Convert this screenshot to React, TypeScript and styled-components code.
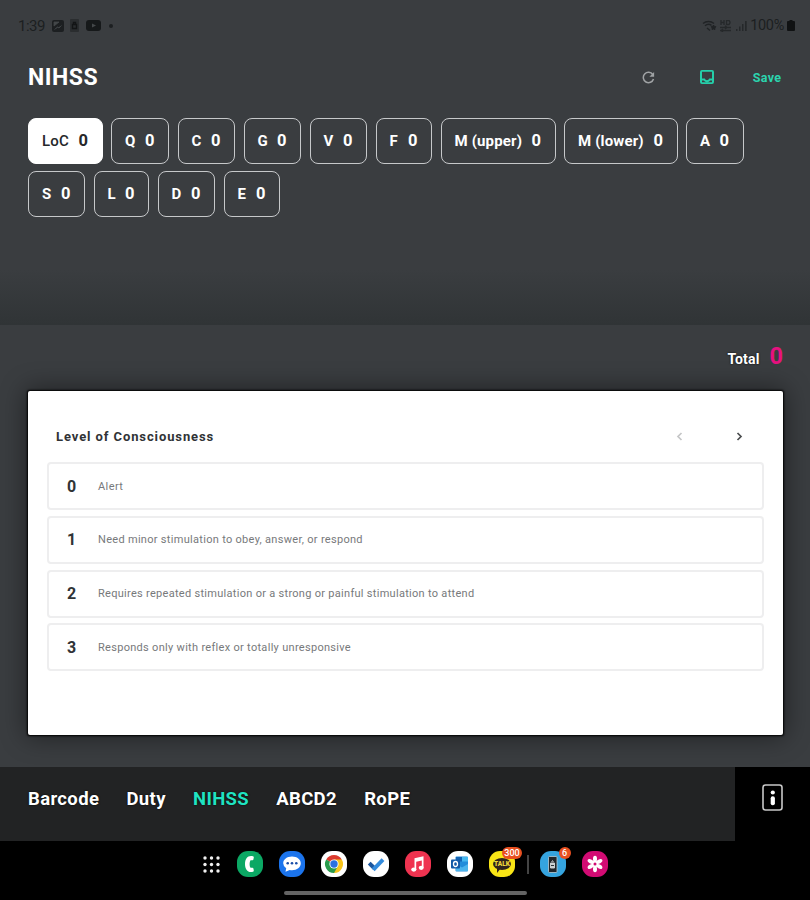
import React from "react";
import styled, { createGlobalStyle } from "styled-components";

const GlobalStyle = createGlobalStyle`
  * { box-sizing: border-box; }
  body { margin: 0; background: #000; font-family: Roboto, "Liberation Sans", sans-serif; }
  button { font-family: inherit; border: 0; padding: 0; background: none; cursor: pointer; }
  svg { display: block; flex: none; }
`;

const Screen = styled.main`
  width: 810px;
  height: 900px;
  overflow: hidden;
  display: flex;
  flex-direction: column;
  background: #3a3d40;
`;

const Upper = styled.section`
  height: 325px;
  flex: none;
  display: flex;
  flex-direction: column;
  background: linear-gradient(#3a3d40 0, #3a3d40 270px, #303436 325px);
`;

const StatusBar = styled.div`
  height: 50px;
  display: flex;
  align-items: center;
  justify-content: space-between;
  padding: 1px 15px 0 18px;
  color: #1c1f21;
  font-size: 15px;
`;

const StatusGroup = styled.div<{ $gap: number }>`
  display: flex;
  align-items: center;
  gap: ${(p) => p.$gap}px;
`;

const Clock = styled.span`
  width: 27px;
  letter-spacing: -0.5px;
`;

const Percent = styled.span`
  font-size: 14.5px;
  letter-spacing: -0.3px;
`;

const NoticeDot = styled.i`
  width: 4px;
  height: 4px;
  margin-left: 2px;
  border-radius: 50%;
  background: #1c1f21;
`;

const Header = styled.header`
  height: 54px;
  display: flex;
  align-items: center;
  justify-content: space-between;
  padding: 0 28px;
`;

const Title = styled.h1`
  margin: 2px 0 0;
  color: #fff;
  font-size: 23px;
  line-height: 28px;
  font-weight: 700;
  letter-spacing: 0.55px;
`;

const Actions = styled.div`
  display: flex;
  align-items: center;
  gap: 37px;
`;

const IconButton = styled.button<{ $tone: string }>`
  width: 22px;
  height: 22px;
  display: grid;
  place-items: center;
  color: ${(p) => p.$tone};
`;

const SaveButton = styled.button`
  width: 30px;
  margin-left: -3px;
  color: #2bd4ae;
  font-size: 12.5px;
  font-weight: 700;
  letter-spacing: 0.25px;
  white-space: nowrap;
`;

const ChipRows = styled.div`
  display: flex;
  flex-direction: column;
  gap: 7px;
  padding: 14px 28px 0;
`;

const ChipRow = styled.div`
  display: flex;
  gap: 8.5px;
`;

const Chip = styled.button<{ $width: number; $active?: boolean }>`
  width: ${(p) => p.$width}px;
  height: 46px;
  flex: none;
  display: flex;
  align-items: center;
  justify-content: space-between;
  padding: 0 13.5px 1px 13px;
  border: 1px solid ${(p) => (p.$active ? "#fff" : "#c6c8ca")};
  border-radius: 8px;
  background: ${(p) => (p.$active ? "#fff" : "transparent")};
  color: ${(p) => (p.$active ? "#25282a" : "#fff")};
  font-size: 15px;
  font-weight: ${(p) => (p.$active ? 500 : 700)};
  letter-spacing: 0.15px;
  white-space: nowrap;
`;

const ChipScore = styled.span`
  font-size: 16.5px;
  font-weight: 700;
`;

const Lower = styled.section`
  height: 442px;
  flex: none;
  display: flex;
  flex-direction: column;
  padding: 0 27px 0 28px;
`;

const TotalLine = styled.div`
  height: 66px;
  display: flex;
  align-items: baseline;
  justify-content: flex-end;
  gap: 10px;
  padding-top: 17px;
  color: #fff;
`;

const TotalLabel = styled.span`
  font-size: 14px;
  font-weight: 700;
  letter-spacing: 0.15px;
  text-shadow: 0 0 2px #000;
`;

const TotalScore = styled.span`
  font-size: 23.5px;
  font-weight: 700;
  color: #e6117f;
`;

const Card = styled.article`
  height: 344px;
  background: #fff;
  border-radius: 2px;
  box-shadow: 0 0 2px 0.5px #000, 0 0 26px 2px rgba(0, 0, 0, 0.45);
`;

const CardHeader = styled.div`
  height: 71px;
  display: flex;
  align-items: center;
  justify-content: space-between;
  padding: 20px 33px 0 28px;
`;

const CardTitle = styled.h2`
  margin: 0;
  color: #303336;
  font-size: 13px;
  font-weight: 700;
  letter-spacing: 0.9px;
`;

const Pager = styled.div`
  display: flex;
  gap: 37px;
`;

const OptionList = styled.div`
  display: flex;
  flex-direction: column;
  gap: 5.8px;
  padding: 0 19px;
`;

const Option = styled.button`
  height: 48px;
  display: flex;
  align-items: center;
  padding: 0 18px;
  border: 2px solid #eeeeef;
  border-radius: 4px;
  text-align: left;
`;

const OptionScore = styled.span`
  width: 31px;
  color: #303336;
  font-size: 16px;
  font-weight: 700;
`;

const OptionText = styled.span<{ $tracking: number }>`
  color: #77797b;
  font-size: 11px;
  letter-spacing: ${(p) => p.$tracking}px;
  white-space: nowrap;
`;

const Navigation = styled.nav`
  height: 74px;
  flex: none;
  display: grid;
  grid-template-columns: 735px 75px;
  background: #000;
`;

const Tabs = styled.div`
  display: flex;
  gap: 27.2px;
  padding: 20px 28px;
  background: #222324;
`;

const Tab = styled.button<{ $active?: boolean }>`
  height: 24px;
  color: ${(p) => (p.$active ? "#20e3c2" : "#fff")};
  font-size: 18.5px;
  line-height: 24px;
  font-weight: 700;
  letter-spacing: 0.35px;
  text-shadow: 0 0 2px #000;
`;

const InfoButton = styled.button`
  display: flex;
  justify-content: center;
  padding-top: 17px;
`;

const Dock = styled.footer`
  height: 59px;
  flex: none;
  display: flex;
  flex-direction: column;
  align-items: flex-start;
  background: #000;
`;

const DockApps = styled.div`
  height: 46px;
  display: flex;
  align-items: center;
  gap: 16px;
  padding-left: 203px;
`;

const AppIcon = styled.span<{ $color: string }>`
  position: relative;
  width: 26px;
  height: 26px;
  border-radius: 11px;
  background: ${(p) => p.$color};
`;

const Launcher = styled.span`
  width: 18px;
  display: flex;
`;

const DockDivider = styled.i`
  width: 2px;
  height: 19px;
  margin: 0 -5px 0 -4.5px;
  background: #444;
`;

const Badge = styled.span<{ $width: number }>`
  position: absolute;
  top: -4px;
  right: ${(p) => (p.$width > 14 ? -7 : -5)}px;
  width: ${(p) => p.$width}px;
  height: 12px;
  border-radius: 6px;
  background: #e95020;
  color: #fff;
  font-size: 9px;
  line-height: 12px;
  font-weight: 500;
  text-align: center;
`;

const HomeBar = styled.i`
  width: 243px;
  height: 4px;
  margin: 4px 0 0 284px;
  border-radius: 2px;
  background: #646464;
`;

type ChipData = { label: string; width: number; active?: boolean };

const chipRows: ChipData[][] = [
  [
    { label: "LoC", width: 74.5, active: true },
    { label: "Q", width: 58 },
    { label: "C", width: 57.5 },
    { label: "G", width: 57.5 },
    { label: "V", width: 57.5 },
    { label: "F", width: 56.5 },
    { label: "M (upper)", width: 115 },
    { label: "M (lower)", width: 113.5 },
    { label: "A", width: 57.5 },
  ],
  [
    { label: "S", width: 57 },
    { label: "L", width: 55.5 },
    { label: "D", width: 57.5 },
    { label: "E", width: 56.5 },
  ],
];

const options = [
  { text: "Alert", tracking: 0.4 },
  { text: "Need minor stimulation to obey, answer, or respond", tracking: 0.3 },
  { text: "Requires repeated stimulation or a strong or painful stimulation to attend", tracking: 0.29 },
  { text: "Responds only with reflex or totally unresponsive", tracking: 0.3 },
];

const tabs = ["Barcode", "Duty", "NIHSS", "ABCD2", "RoPE"];

const PictureIcon = () => (
  <svg width="12" height="12" viewBox="0 0 12 12">
    <rect width="12" height="12" rx="2" fill="#1c1f21" />
    <path d="M2 2h5L2 6zM2.500 9.500 5.500 7l1.500 1 2.500-2.500" fill="#44484a" stroke="#44484a" strokeWidth=".8" />
  </svg>
);

const PhoneNoticeIcon = () => (
  <svg width="9" height="13" viewBox="0 0 9 13">
    <rect width="9" height="13" rx="1" fill="#2a2d2f" />
    <path d="M2.5 5.5h4v4h-4zM3.5 5V3.5h2V5" fill="none" stroke="#131516" strokeWidth="1.4" />
  </svg>
);

const VideoIcon = () => (
  <svg width="15" height="11" viewBox="0 0 15 11">
    <rect width="15" height="11" rx="3" fill="#16191a" />
    <path d="m6 3.5 4 2-4 2z" fill="#44484a" />
  </svg>
);

const WifiIcon = () => (
  <svg width="15" height="12" viewBox="0 0 15 12" fill="none" stroke="#202325">
    <path d="M1 3.5C4 .8 9 .8 12 3.5M3 5.8c2-1.7 4.5-1.8 6.5-.5M5 8l3 2.5" strokeWidth="1.4" />
    <path d="m11.5 5 .8 1.4 1.6.3-1.1 1.3.2 1.5-1.5-.6-1.4.6.1-1.6-1-1.2 1.6-.3z" fill="#202325" />
  </svg>
);

const NetworkIcon = () => (
  <svg width="12" height="12" viewBox="0 0 12 12" fill="none" stroke="#25282a" strokeWidth="1.3">
    <path d="M1 0v5M4 0v5M1 2.5h3M6.5.5v4H9q2-2 0-4zM0 7.5h11M5 5.8 7 7.5 5 9M11 10.5H0M3 9l-2 1.5L3 12" />
  </svg>
);

const SignalIcon = () => (
  <svg width="12" height="12" viewBox="0 0 12 12" fill="#25282a">
    <path d="M1 9h1.500v2H1zM4 6.500h1.500V11H4zM7 4h1.500v7H7zM10 1h1.700v10H10z" />
  </svg>
);

const BatteryIcon = () => (
  <svg width="8" height="11" viewBox="0 0 8 11">
    <path d="M2.5 0h3v1H7q1 0 1 1v8q0 1-1 1H1q-1 0-1-1V2q0-1 1-1h1.5z" fill="#101213" />
  </svg>
);

const RefreshIcon = () => (
  <svg width="13" height="13" viewBox="0 0 13 13" fill="none" stroke="currentColor" strokeWidth="1.5">
    <path d="M10.8 3.5A5.2 5.2 0 1 0 11.5 8" />
    <path d="M12.1 1v4.7H7.4z" fill="currentColor" stroke="none" />
  </svg>
);

const InboxIcon = () => (
  <svg width="14" height="14" viewBox="0 0 14 14">
    <path
      fill="currentColor"
      fillRule="evenodd"
      d="M2 0h10q2 0 2 2v10q0 2-2 2H2q-2 0-2-2V2q0-2 2-2m0 1.8v6.7h2.8a2.3 2.3 0 0 0 4.4 0H12V1.8zm0 8.6v1.8h10v-1.8h-1.7a4 4 0 0 1-6.6 0z"
    />
  </svg>
);

const Chevron = ({ next = false }: { next?: boolean }) => (
  <svg width="22" height="22" viewBox="0 0 22 22" fill="none">
    <path d={next ? "m9.5 7 3.5 3.5-3.5 3.500" : "M12.5 7 9 10.5l3.500 3.500"} stroke="currentColor" strokeWidth="1.7" />
  </svg>
);

const InfoIcon = () => (
  <svg width="21" height="27" viewBox="0 0 21 27">
    <rect x="1" y="1" width="19" height="25" rx="2.5" fill="none" stroke="#c8c8c8" strokeWidth="1.6" />
    <circle cx="10.8" cy="8.5" r="2.1" fill="#fff" />
    <rect x="8.7" y="12.2" width="4.2" height="9" rx="2" fill="#fff" />
  </svg>
);

const LauncherIcon = () => (
  <svg width="17" height="17" viewBox="0 0 17 17" fill="#f0f0f0">
    {[2, 8.5, 15].map((y) => [2, 8.5, 15].map((x) => <circle key={`${x}-${y}`} cx={x} cy={y} r="1.7" />))}
  </svg>
);

const CallGlyph = () => (
  <svg width="26" height="26" viewBox="0 0 26 26">
    <path
      d="M16 5.2c-5.2-1.3-8 2.4-8 7.8s2.8 9.1 8 7.8q1-.3.8-1.3l-.4-2q-.2-.9-1.1-.8l-1.8.1c-1.2-1.8-1.2-5.800 0-7.600l1.800.1q.9.1 1.100-.8l.4-2q.2-1-.8-1.300"
      fill="#fff"
    />
  </svg>
);

const MessageGlyph = () => (
  <svg width="26" height="26" viewBox="0 0 26 26">
    <path d="M13 5.5c5 0 8.8 2.8 8.8 6.8S18 19.200 13 19.200q-1.200 0-2.300-.2L6.500 20.700l.7-3.400q-3-2-3-5c0-4 3.800-6.800 8.800-6.800" fill="#fff" />
    <g fill="#1b4ea8">
      <circle cx="8.700" cy="12.300" r="1.300" />
      <circle cx="13" cy="12.300" r="1.300" />
      <circle cx="17.300" cy="12.300" r="1.300" />
    </g>
  </svg>
);

const ChromeGlyph = () => (
  <svg width="26" height="26" viewBox="0 0 26 26">
    <path d="M13 13 5.2 8.5a9 9 0 0 1 15.6 0z" fill="#dc3b2f" />
    <path d="M13 13 20.8 8.5A9 9 0 0 1 13 22z" fill="#f9c51d" />
    <path d="M13 13v9A9 9 0 0 1 5.2 8.5z" fill="#299b4c" />
    <path d="M13 8.5h7.8l-4 6.7z" fill="#f9c51d" />
    <path d="m9.1 15.2 7.7 0L13 22z" fill="#299b4c" />
    <circle cx="13" cy="13" r="4.6" fill="#fff" />
    <circle cx="13" cy="13" r="3.7" fill="#2c70e0" />
  </svg>
);

const TodoGlyph = () => (
  <svg width="26" height="26" viewBox="0 0 26 26">
    <path d="m4.8 13.5 2.8-2.8 5.5 5.4-2.9 2.9z" fill="#1b569f" />
    <path d="m8.9 17.2 9.7-9.9 2.8 2.7-9.8 10.2z" fill="#338bdd" />
  </svg>
);

const MusicGlyph = () => (
  <svg width="26" height="26" viewBox="0 0 26 26" fill="#fff">
    <path d="m9.5 7.3 9-2v11.400h-1.700V9.500l-5.600 1.300v8H9.500z" />
    <ellipse cx="8.800" cy="18.600" rx="2.600" ry="2.100" />
    <ellipse cx="16.200" cy="16.800" rx="2.500" ry="2.100" />
  </svg>
);

const OutlookGlyph = () => (
  <svg width="26" height="26" viewBox="0 0 26 26">
    <rect x="8.5" y="5.5" width="12.5" height="15" rx="1" fill="#218cda" />
    <path d="M9 6h6v4.5H9z" fill="#1364b5" />
    <path d="M15 6h6v4.5h-6z" fill="#46b8ef" />
    <path d="m9 13 6 3.5 6-3.5v7H9z" fill="#4bb4ec" />
    <rect x="4" y="8.5" width="9" height="9" rx="1" fill="#125aa7" />
    <ellipse cx="8.5" cy="13" rx="2" ry="2.5" fill="none" stroke="#fff" strokeWidth="1.3" />
  </svg>
);

const TalkBubble = styled.span`
  position: absolute;
  left: 4px;
  top: 7px;
  width: 18px;
  height: 12px;
  border-radius: 50%;
  background: #30231b;
  color: #eed83b;
  font-size: 6.5px;
  line-height: 12px;
  font-weight: 900;
  text-align: center;
  &::after {
    content: "";
    position: absolute;
    left: 4px;
    top: 10px;
    border-top: 5px solid #30231b;
    border-right: 4px solid transparent;
  }
`;

const PhoneGlyph = () => (
  <svg width="26" height="26" viewBox="0 0 26 26">
    <rect x="8.5" y="5.5" width="8.5" height="16" rx="1" fill="#20252a" stroke="#b9cbd4" strokeWidth=".8" />
    <path d="M10.5 12h4v5h-4zm1-1.5q1-1.5 2 0" fill="#cbd0d2" stroke="#cbd0d2" />
    <path d="M11 14.5h3" stroke="#30363a" />
  </svg>
);

const GalleryGlyph = () => (
  <svg width="26" height="26" viewBox="0 0 26 26">
    {[0, 60, 120, 180, 240, 300].map((angle) => (
      <ellipse key={angle} cx="13" cy="8" rx="2" ry="3.3" fill="#fff" transform={`rotate(${angle} 13 13)`} />
    ))}
    <circle cx="13" cy="13" r="3.2" fill="#fff" />
    <circle cx="13" cy="13" r="1.5" fill="#d20b73" />
  </svg>
);

export default function App() {
  return (
    <>
      <GlobalStyle />
      <Screen>
        <Upper>
          <StatusBar>
            <StatusGroup $gap={6.5}>
              <Clock>1:39</Clock>
              <PictureIcon />
              <PhoneNoticeIcon />
              <VideoIcon />
              <NoticeDot />
            </StatusGroup>
            <StatusGroup $gap={3}>
              <WifiIcon />
              <NetworkIcon />
              <SignalIcon />
              <Percent>100%</Percent>
              <BatteryIcon />
            </StatusGroup>
          </StatusBar>
          <Header>
            <Title>NIHSS</Title>
            <Actions>
              <IconButton $tone="#a0a3a5" aria-label="Reset"><RefreshIcon /></IconButton>
              <IconButton $tone="#25cfaa" aria-label="Inbox"><InboxIcon /></IconButton>
              <SaveButton>Save</SaveButton>
            </Actions>
          </Header>
          <ChipRows>
            {chipRows.map((row, index) => (
              <ChipRow key={index}>
                {row.map((chip) => (
                  <Chip key={chip.label} $width={chip.width} $active={chip.active}>
                    <span>{chip.label}</span>
                    <ChipScore>0</ChipScore>
                  </Chip>
                ))}
              </ChipRow>
            ))}
          </ChipRows>
        </Upper>
        <Lower>
          <TotalLine>
            <TotalLabel>Total</TotalLabel>
            <TotalScore>0</TotalScore>
          </TotalLine>
          <Card>
            <CardHeader>
              <CardTitle>Level of Consciousness</CardTitle>
              <Pager>
                <IconButton $tone="#c5c6c7" aria-label="Previous"><Chevron /></IconButton>
                <IconButton $tone="#4b4d4f" aria-label="Next"><Chevron next /></IconButton>
              </Pager>
            </CardHeader>
            <OptionList>
              {options.map((option, score) => (
                <Option key={score}>
                  <OptionScore>{score}</OptionScore>
                  <OptionText $tracking={option.tracking}>{option.text}</OptionText>
                </Option>
              ))}
            </OptionList>
          </Card>
        </Lower>
        <Navigation>
          <Tabs>
            {tabs.map((tab) => (
              <Tab key={tab} $active={tab === "NIHSS"}>{tab}</Tab>
            ))}
          </Tabs>
          <InfoButton aria-label="Information"><InfoIcon /></InfoButton>
        </Navigation>
        <Dock>
          <DockApps>
            <Launcher><LauncherIcon /></Launcher>
            <AppIcon $color="#0ba864"><CallGlyph /></AppIcon>
            <AppIcon $color="#1b74ed"><MessageGlyph /></AppIcon>
            <AppIcon $color="#fff"><ChromeGlyph /></AppIcon>
            <AppIcon $color="#fff"><TodoGlyph /></AppIcon>
            <AppIcon $color="#ef3350"><MusicGlyph /></AppIcon>
            <AppIcon $color="#fff"><OutlookGlyph /></AppIcon>
            <AppIcon $color="#f9e516"><TalkBubble>TALK</TalkBubble><Badge $width={20}>300</Badge></AppIcon>
            <DockDivider />
            <AppIcon $color="#35a4df"><PhoneGlyph /><Badge $width={12}>6</Badge></AppIcon>
            <AppIcon $color="#d20b73"><GalleryGlyph /></AppIcon>
          </DockApps>
          <HomeBar />
        </Dock>
      </Screen>
    </>
  );
}
